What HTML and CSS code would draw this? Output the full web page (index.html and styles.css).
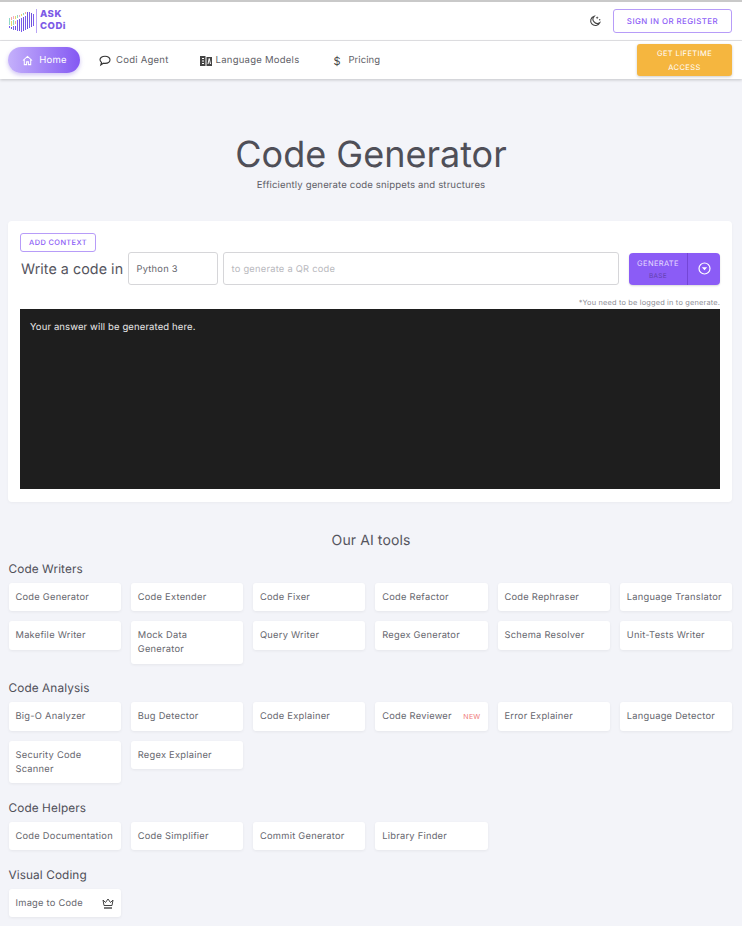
FILE: index.html
```html
<!DOCTYPE html>
<html lang="en">
<head>
<meta charset="utf-8">
<title>Code Generator</title>
<link rel="stylesheet" href="styles.css">
</head>
<body>
<header class="topbar">
  <div class="logo">
    <svg class="logo-mark" width="26" height="24" viewBox="0 0 26 24" fill="none" stroke-width="1">
      <g transform="translate(.5 0)">
      <path d="M1 9v7" stroke="#8fd8c8"/><path d="M1 17v2" stroke="#7b5cf0"/>
      <path d="M3 8v3" stroke="#f4a9a0"/><path d="M3 12v5" stroke="#e9d66b"/><path d="M3 18v2" stroke="#6f55d8"/>
      <path d="M5 7v3" stroke="#f0a8c8"/><path d="M5 11v5" stroke="#90d8c0"/><path d="M5 17v4" stroke="#7b5cf0"/>
      <path d="M7 7v3" stroke="#e9d66b"/><path d="M7 12v3" stroke="#f4a9a0"/><path d="M7 17v4" stroke="#6f55d8"/>
      <path d="M9 6v3" stroke="#90d8c0"/><path d="M9 11v11" stroke="#7b5cf0"/>
      <path d="M11 6v2" stroke="#f0a8c8"/><path d="M11 10v12" stroke="#6f55d8"/>
      <path d="M13 5v2" stroke="#e9d66b"/><path d="M13 9v14" stroke="#7b5cf0"/>
      <path d="M15 4v2" stroke="#90d8c0"/><path d="M15 8v14" stroke="#6f55d8"/>
      <path d="M17 3v2" stroke="#f4a9a0"/><path d="M17 7v14" stroke="#7b5cf0"/>
      <path d="M19 3v17" stroke="#6f55d8"/><path d="M21 3v16" stroke="#7b5cf0"/><path d="M23 4v14" stroke="#6f55d8"/><path d="M25 5v12" stroke="#7b5cf0"/>
      </g>
    </svg>
    <span class="logo-text">ASK<br>CODi</span>
  </div>
  <div class="top-actions">
    <svg class="moon" width="12" height="12" viewBox="0 0 14 14" fill="none" stroke="#444" stroke-width="1.300">
      <path d="M6 1.500A5.500 5.500 0 1 0 12.500 9 5 5 0 0 1 6 1.500Z"/>
      <path d="M9.500 1.500l.5 1.200 1.200.5-1.200.5-.5 1.200-.5-1.200-1.200-.5 1.200-.5Z" fill="#444" stroke="none"/>
      <circle cx="12.500" cy="5.500" r=".8" fill="#444" stroke="none"/>
    </svg>
    <a class="outline-btn signin">SIGN IN OR REGISTER</a>
  </div>
</header>
<nav class="navbar">
  <ul class="nav-list">
    <li class="nav-item active">
      <svg width="11" height="11" viewBox="0 0 12 12" fill="none" stroke="currentColor" stroke-width="1.100"><path d="M1 6 6 1.500 11 6M2.500 5v5.500h2.500V7.500h2v3h2.500V5"/></svg>
      Home
    </li>
    <li class="nav-item agent">
      <svg width="12" height="12" viewBox="0 0 12 12" fill="none" stroke="#333" stroke-width="1.100"><path d="M6 1.200c2.900 0 5 1.500 5 3.600S8.900 8.400 6 8.400c-.6 0-1.200-.1-1.700-.2L1.800 10l.7-2.600C1.600 6.700 1 5.800 1 4.800 1 2.700 3.100 1.200 6 1.200Z"/></svg>
      Codi Agent
    </li>
    <li class="nav-item models">
      <svg width="12" height="10" viewBox="0 0 12 10"><path fill="#444" d="M0 0h5.500v10H0zM6.500 1H12v9H6.500z"/><path d="M2 2.500h2M2 5h2M2 7.500h2M8 8l1.200-5.500L10.500 8" stroke="#fff" stroke-width="1" fill="none"/></svg>
      Language Models
    </li>
    <li class="nav-item pricing">
      <span class="dollar">$</span>
      Pricing
    </li>
  </ul>
  <a class="lifetime">GET LIFETIME<br>ACCESS</a>
</nav>
<main>
  <section class="hero">
    <h1>Code Generator</h1>
    <p>Efficiently generate code snippets and structures</p>
  </section>
  <section class="card">
    <a class="outline-btn context">ADD CONTEXT</a>
    <div class="prompt-row">
      <span class="prompt-label">Write a code in</span>
      <div class="field lang">Python 3</div>
      <div class="field query">to generate a QR code</div>
      <div class="generate">
        <div class="gen-main"><span>GENERATE</span><small>BASE</small></div>
        <div class="gen-more">
          <svg width="13" height="13" viewBox="0 0 13 13" fill="none"><circle cx="6.500" cy="6.500" r="5.500" stroke="#fff" stroke-width="1.200"/><path d="M3.800 5.200h5.400L6.500 8.200Z" fill="#fff"/></svg>
        </div>
      </div>
    </div>
    <p class="note">*You need to be logged in to generate.</p>
    <div class="output">Your answer will be generated here.</div>
  </section>
  <h2 class="tools-title">Our AI tools</h2>
  <h3 class="group">Code Writers</h3>
  <div class="tools">
    <a class="tool">Code Generator</a><a class="tool">Code Extender</a><a class="tool">Code Fixer</a><a class="tool">Code Refactor</a><a class="tool">Code Rephraser</a><a class="tool">Language Translator</a>
    <a class="tool">Makefile Writer</a><a class="tool">Mock Data Generator</a><a class="tool">Query Writer</a><a class="tool">Regex Generator</a><a class="tool">Schema Resolver</a><a class="tool">Unit-Tests Writer</a>
  </div>
  <h3 class="group">Code Analysis</h3>
  <div class="tools">
    <a class="tool">Big-O Analyzer</a><a class="tool">Bug Detector</a><a class="tool">Code Explainer</a><a class="tool badged">Code Reviewer <span class="new">NEW</span></a><a class="tool">Error Explainer</a><a class="tool">Language Detector</a>
    <a class="tool">Security Code Scanner</a><a class="tool">Regex Explainer</a>
  </div>
  <h3 class="group">Code Helpers</h3>
  <div class="tools">
    <a class="tool">Code Documentation</a><a class="tool">Code Simplifier</a><a class="tool">Commit Generator</a><a class="tool">Library Finder</a>
  </div>
  <h3 class="group">Visual Coding</h3>
  <div class="tools">
    <a class="tool badged">Image to Code
      <svg width="12" height="11" viewBox="0 0 12 11" fill="none" stroke="#444" stroke-width="1"><path d="M1 2l2.500 2.500L6 1l2.500 3.500L11 2l-1 5.500H2Z"/><path d="M2 10h8" stroke-width="1.400"/></svg>
    </a>
  </div>
</main>
</body>
</html>
```
FILE: styles.css
```css
* { box-sizing: border-box; }
html, body { margin: 0; padding: 0; }
body {
  background: #f3f4f9;
  font-family: Inter, "Liberation Sans", sans-serif;
  color: #55555e;
  height: 926px;
  overflow: hidden;
  text-rendering: geometricPrecision;
}
a { text-decoration: none; display: block; }
.topbar {
  height: 41px;
  background: #fff;
  border-top: 2px solid #c9c9c9;
  border-bottom: 1px solid #e4e4e7;
  display: flex;
  align-items: center;
  justify-content: space-between;
  padding: 0 10px 0 8px;
}
.logo { display: flex; align-items: center; }
.logo-mark { flex: none; }
.logo-text {
  border-left: 1px solid #b9a5f5;
  margin-left: 2px;
  padding-left: 3px;
  font-size: 9.500px;
  line-height: 12px;
  font-weight: 800;
  color: #7c5ae6;
  letter-spacing: .5px;
}
.top-actions { display: flex; align-items: center; gap: 12px; }
.outline-btn {
  border: 1px solid #b79cf8;
  border-radius: 3px;
  color: #8b5cf6;
  background: #fff;
  font-weight: 500;
  text-align: center;
}
.signin { width: 119px; height: 24px; line-height: 22px; font-size: 7.900px; letter-spacing: .45px; }
.navbar {
  height: 38px;
  background: #fff;
  box-shadow: 0 1px 3px rgba(0,0,0,.2);
  display: flex;
  align-items: center;
  justify-content: space-between;
  padding: 0 10px 0 8px;
  position: relative;
}
.nav-list { list-style: none; margin: 0; padding: 0; display: flex; align-items: center; }
.nav-item {
  display: flex;
  align-items: center;
  gap: 5px;
  font-size: 9.500px;
  letter-spacing: .25px;
  color: #5f5f68;
  height: 26px;
  padding-top: 1px;
  white-space: nowrap;
}
.nav-item.active {
  width: 72px;
  justify-content: center;
  gap: 6px;
  padding-left: 1px;
  border-radius: 13px;
  color: #fff;
  background: linear-gradient(90deg, #c4b0fb, #8458f3);
  box-shadow: 0 2px 4px rgba(120,90,220,.35);
}
.agent { margin-left: 19px; }
.models { margin-left: 31px; gap: 4px; }
.pricing { margin-left: 34px; gap: 8px; letter-spacing: .05px; }
.dollar { font-size: 11px; color: #444; width: 7px; }
.lifetime {
  width: 95px;
  height: 32px;
  border-radius: 3px;
  background: #f5b63f;
  color: #fff;
  font-size: 7.500px;
  font-weight: 400;
  line-height: 14px;
  letter-spacing: .4px;
  text-align: center;
  padding-top: 3px;
  box-shadow: 0 1px 3px rgba(0,0,0,.2);
}
.hero { text-align: center; padding-top: 53px; height: 142px; }
.hero h1 { margin: 0; font-size: 36px; line-height: 44px; font-weight: 400; color: #4f4f58; }
.hero p { margin: 3px 0 0; font-size: 9.600px; letter-spacing: .12px; line-height: 14px; color: #5f5f68; }
.card {
  margin: 0 10px 0 8px;
  height: 281px;
  background: #fff;
  border-radius: 4px;
  padding: 12px;
  box-shadow: 0 1px 3px rgba(0,0,0,.04);
}
.context { width: 76px; height: 19px; line-height: 17px; font-size: 7.400px; letter-spacing: .4px; }
.prompt-row { display: flex; align-items: center; height: 33px; }
.prompt-label { font-size: 14.300px; letter-spacing: .05px; width: 108px; padding: 1px 0 0 1px; white-space: nowrap; color: #55555e; }
.field {
  height: 33px;
  border: 1px solid #d6d6d9;
  border-radius: 3px;
  font-size: 9.300px;
  letter-spacing: .25px;
  line-height: 33px;
  padding: 0 8px 0 7.500px;
  color: #66666e;
}
.lang { width: 90px; }
.query { width: 396px; margin-left: 5px; color: #b8b8bd; }
.generate {
  margin-left: 10px;
  width: 91px;
  height: 32px;
  border-radius: 4px;
  background: #8b5cf6;
  display: flex;
  box-shadow: 0 1px 2px rgba(0,0,0,.15);
}
.gen-main {
  width: 59px;
  border-right: 1px solid #7446d6;
  display: flex;
  flex-direction: column;
  align-items: center;
  justify-content: center;
  gap: 4px;
  font-size: 7.500px;
  letter-spacing: .35px;
  line-height: 8px;
  color: #e6dcff;
  font-weight: 400;
  padding-top: 3px;
}
.gen-main small { font-size: 6.500px; color: #6442b0; font-weight: 400; }
.gen-more { flex: 1; display: flex; align-items: center; justify-content: center; }
.note { margin: 13px 0 0; height: 11px; text-align: right; font-size: 7.400px; letter-spacing: .17px; line-height: 10px; color: #8e8e96; }
.output {
  height: 180px;
  background: #1e1e1e;
  color: #e8e8e8;
  font-size: 9.500px;
  letter-spacing: .12px;
  line-height: 12px;
  padding: 13px 10px;
}
.tools-title { margin: 30px 0 0; height: 18px; text-align: center; font-size: 14px; letter-spacing: .1px; line-height: 18px; font-weight: 400; color: #55555e; }
.group { margin: 10.500px 0 6px; padding-left: 8.500px; height: 16px; font-size: 11.800px; line-height: 16px; font-weight: 400; letter-spacing: .1px; color: #4f4f58; }
.tools {
  display: grid;
  grid-template-columns: repeat(6, 1fr);
  gap: 10px;
  padding: 0 10px 0 8.500px;
  align-items: start;
}
.tool {
  background: #fff;
  border-radius: 3px;
  padding: 8px 7px 6.500px;
  font-size: 9.300px;
  letter-spacing: .25px;
  line-height: 14px;
  color: #66666e;
  box-shadow: 0 1px 3px rgba(0,0,0,.06);
}
.tools + .group { margin-top: 16.500px; }
.badged { display: flex; justify-content: space-between; align-items: center; }
.new { color: #ef7b7b; font-size: 7px; }
```
